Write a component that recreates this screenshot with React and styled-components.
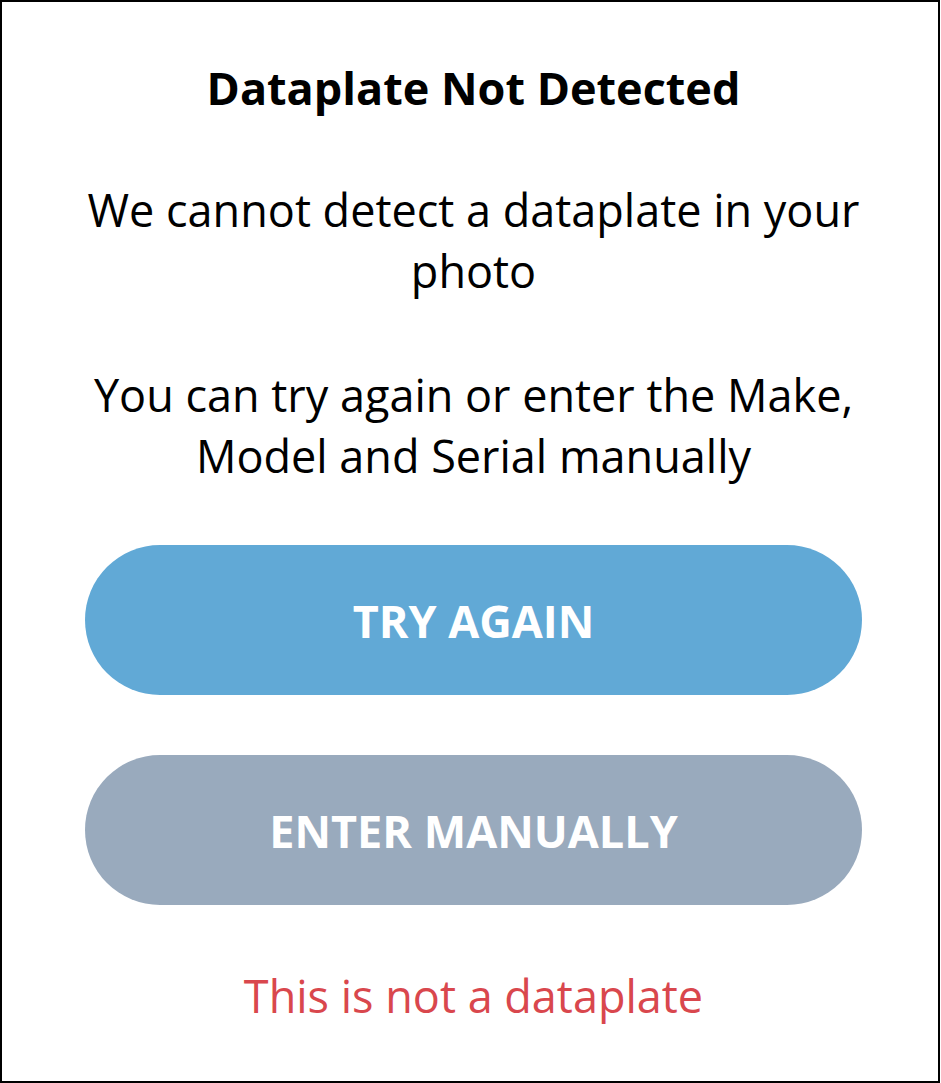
import React from 'react';
import styled, { createGlobalStyle } from 'styled-components';

const GlobalStyle = createGlobalStyle`
  html, body {
    margin: 0;
    padding: 0;
    background: #ffffff;
  }
  body {
    font-family: "Open Sans", "Liberation Sans", sans-serif;
  }
`;

const Frame = styled.div`
  box-sizing: border-box;
  width: 940px;
  height: 1083px;
  border: 2px solid #000;
  display: flex;
  flex-direction: column;
  align-items: center;
  padding: 55px 76px 0 83px;
  text-align: center;
  color: #000;
`;

const Title = styled.h1`
  margin: 0;
  font-size: 45px;
  line-height: 61px;
  font-weight: 700;
`;

const Message = styled.p`
  margin: ${(p) => p.$top}px 0 0;
  font-size: 45px;
  line-height: 61px;
  font-weight: 400;
`;

const Actions = styled.div`
  align-self: stretch;
  display: flex;
  flex-direction: column;
  gap: 60px;
  margin-top: 59px;
`;

const PillButton = styled.button`
  height: 150px;
  border: none;
  border-radius: 75px;
  background: ${(p) => p.$color};
  color: #fff;
  font-family: inherit;
  font-size: 45px;
  font-weight: 700;
  cursor: pointer;
`;

const RejectLink = styled.a`
  margin-top: 60px;
  font-size: 45px;
  line-height: 61px;
  color: #d9474d;
  text-decoration: none;
  cursor: pointer;
`;

const App = () => (
  <>
    <GlobalStyle />
    <Frame>
      <Title>Dataplate Not Detected</Title>
      <Message $top={61}>We cannot detect a dataplate in your photo</Message>
      <Message $top={63}>You can try again or enter the Make, Model and Serial manually</Message>
      <Actions>
        <PillButton $color="#61a9d6">TRY AGAIN</PillButton>
        <PillButton $color="#99aabd">ENTER MANUALLY</PillButton>
      </Actions>
      <RejectLink>This is not a dataplate</RejectLink>
    </Frame>
  </>
);

export default App;
